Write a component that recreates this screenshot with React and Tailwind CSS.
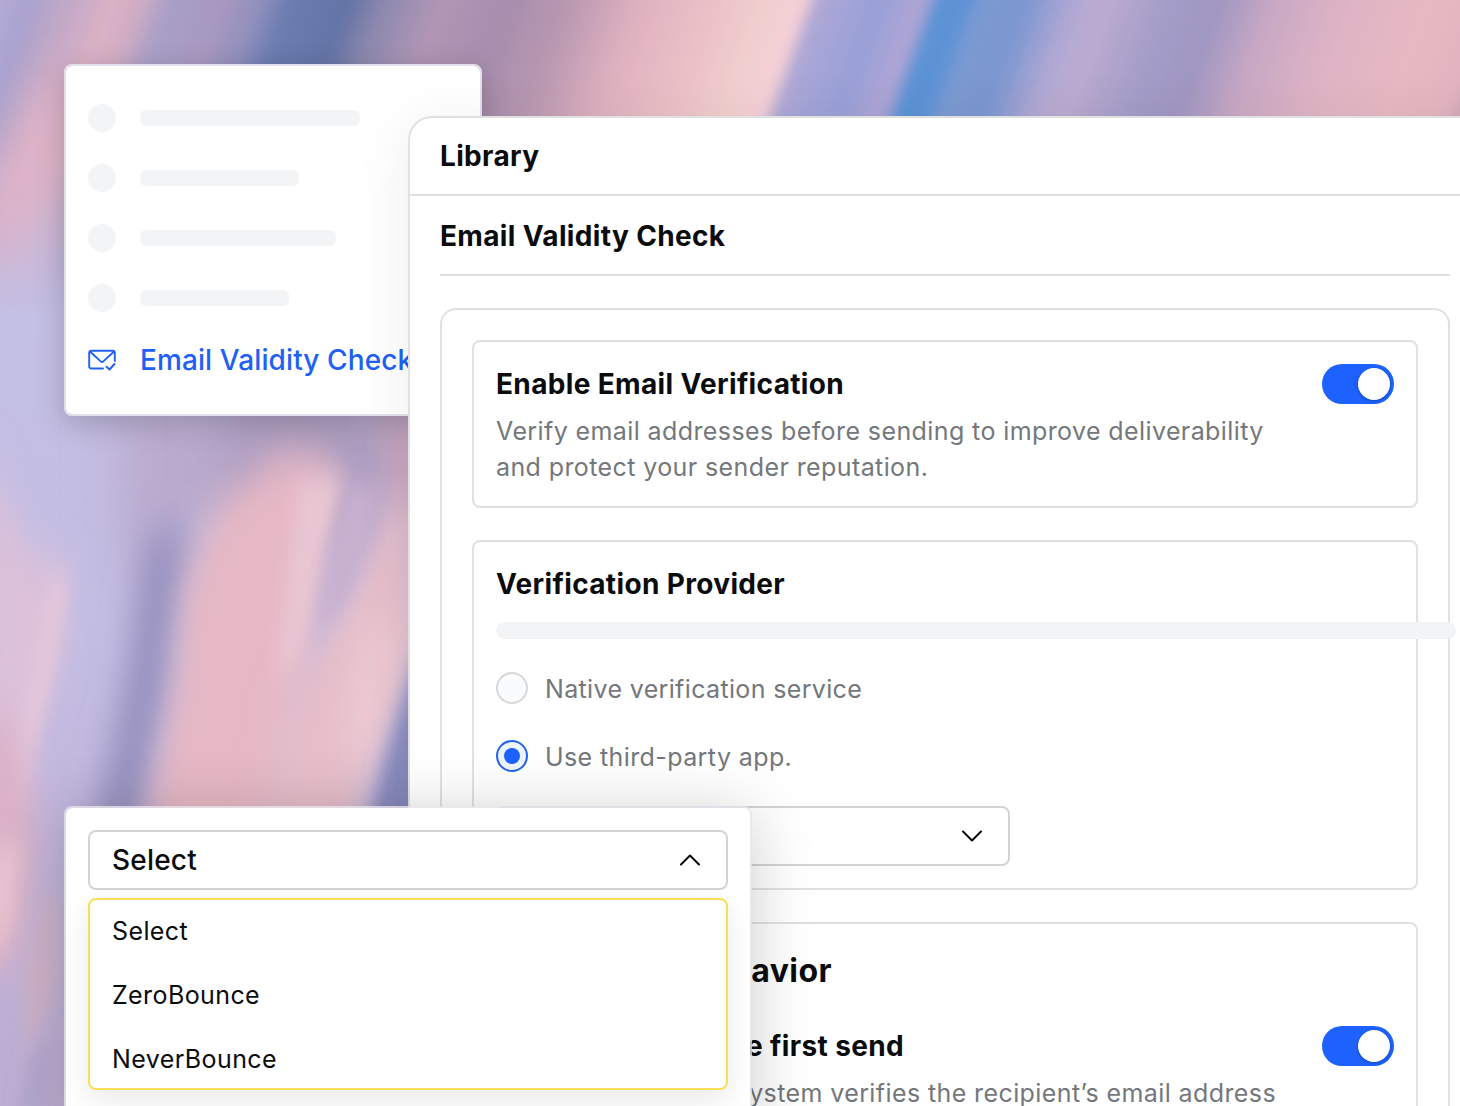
import React from "react";

function Toggle() {
  return (
    <div className="flex h-10 w-[72px] shrink-0 items-center justify-end rounded-full bg-[#1d62fe] p-1">
      <div className="size-8 rounded-full bg-white shadow-[0_1px_3px_rgba(0,0,0,0.3)]" />
    </div>
  );
}

function Wallpaper() {
  const stops = [
    [0, "#b4abd6"], [30, "#a9a2cf"], [58, "#bca6c8"], [115, "#dcb2c5"], [140, "#d0acc4"], [170, "#a8a0c7"],
    [225, "#a898c0"], [262, "#8f8fbd"], [290, "#6c7cb0"], [350, "#6474a6"], [385, "#8c88ae"], [440, "#b196b5"],
    [510, "#a78eae"], [570, "#b898b0"], [640, "#dfb1bf"], [720, "#ecc2c7"], [770, "#f1cfcf"], [806, "#f5d0d7"],
    [817, "#aea8d6"], [880, "#98a0d8"], [925, "#b1a6d4"], [939, "#5c93d6"], [965, "#5b92d4"], [985, "#7c9ad3"], [1025, "#7a96d0"],
    [1075, "#b0a8d4"], [1105, "#bcabd0"], [1170, "#a39dc8"], [1220, "#a096c2"], [1275, "#c8a8c4"], [1350, "#dfb4c4"], [1430, "#e6b8c2"],
    [1490, "#e2b4bf"], [1520, "#b48fa8"],
  ];
  return (
    <svg className="absolute inset-0" width="1460" height="1106" viewBox="0 0 1460 1106" aria-hidden="true">
      <defs>
        <linearGradient id="sky" gradientUnits="userSpaceOnUse" x1="0" y1="0" x2="1520" y2="0">
          {stops.map(([x, c]) => (
            <stop key={x} offset={x / 1520} stopColor={c} />
          ))}
        </linearGradient>
        <linearGradient id="fade" x1="0" y1="0" x2="0" y2="1">
          <stop offset="0" stopColor="#c6bee2" stopOpacity="0" />
          <stop offset="0.17" stopColor="#c4bfe4" />
          <stop offset="0.5" stopColor="#c3bde3" />
          <stop offset="1" stopColor="#bfaed2" />
        </linearGradient>
        <filter id="b5" x="-10%" y="-10%" width="120%" height="120%"><feGaussianBlur stdDeviation="6 8" /></filter>
        <filter id="b8" x="-50%" y="-50%" width="200%" height="200%"><feGaussianBlur stdDeviation="8 14" /></filter>
        <filter id="b16" x="-50%" y="-50%" width="200%" height="200%"><feGaussianBlur stdDeviation="15 22" /></filter>
        <filter id="b26" x="-50%" y="-50%" width="200%" height="200%"><feGaussianBlur stdDeviation="26" /></filter>
      </defs>
      <g filter="url(#b5)">
        <rect x="-100" y="-100" width="1900" height="1300" fill="url(#sky)" transform="skewX(-20)" />
      </g>
      <rect x="0" y="150" width="430" height="956" fill="url(#fade)" />
      <path d="M76 70 L56 170 L-10 270 L-10 190 L40 90Z" fill="#dfb4c8" filter="url(#b16)" />
      <path d="M120 400 L410 400 L410 520 L200 520 L150 640 L120 520Z" fill="#baaacd" filter="url(#b26)" />
      <path d="M225 400 L330 400 L410 450 L360 560 L230 500Z" fill="#aa9bbf" filter="url(#b26)" />
      <path d="M375 410 L440 410 L440 560 L400 520Z" fill="#c6a2bc" filter="url(#b16)" />
      <path d="M148 530 L190 530 L170 690 L140 850 L88 850 L120 700Z" fill="#9792c0" filter="url(#b16)" />
      <path d="M280 450 L335 460 L322 560 L295 700 L280 860 L140 860 L175 690 L185 590 L215 510 Z" fill="#e6b8c4" filter="url(#b16)" />
      <path d="M345 473 L332 530 L300 660 L275 680 L300 480Z" fill="#e9c6d3" filter="url(#b8)" />
      <path d="M390 500 L410 480 L420 640 L370 760 L352 850 L260 850 L280 710 L335 610Z" fill="#e6bec9" filter="url(#b16)" />
      <path d="M348 480 L385 490 L355 590 L315 640 L325 560Z" fill="#c8b0cf" filter="url(#b8)" />
      <path d="M370 620 L404 620 L388 720 L358 790 L345 720Z" fill="#edcad3" filter="url(#b16)" />
      <path d="M430 620 L430 850 L362 850 L388 750Z" fill="#898bbf" filter="url(#b8)" />
      <path d="M-20 440 L4 500 L36 560 L66 560 L62 640 L30 740 L20 820 L-20 820Z" fill="#dcc1d9" filter="url(#b16)" />
      <path d="M54 575 L68 575 L48 690 L18 800 L8 800Z" fill="#e8c8da" filter="url(#b8)" />
      <path d="M-20 690 L20 750 L36 840 L20 960 L-20 980Z" fill="#dcb0c6" filter="url(#b16)" />
      <path d="M-10 850 L22 840 L14 920 L-10 960Z" fill="#e8c2cf" filter="url(#b8)" />
      <path d="M42 900 L58 900 L52 990 L30 1060 L24 980Z" fill="#d0b2c8" filter="url(#b8)" />
      <path d="M12 1000 L-20 980 L-20 1120 L12 1120Z" fill="#bdaed6" filter="url(#b8)" />
      <path d="M52 1030 L40 1120 L18 1120 L30 1060Z" fill="#b0a6cd" filter="url(#b8)" />
    </svg>
  );
}

function Sidebar() {
  const bars = ["w-[220px]", "w-[159px]", "w-[196px]", "w-[149px]"];
  return (
    <div className="absolute left-16 top-16 h-[352px] w-[418px] rounded-lg border-2 border-[#e4dfeb] bg-white bg-clip-padding px-[22px] pt-[38px] shadow-[0_8px_30px_rgba(0,0,0,0.2)]">
      <div className="flex flex-col gap-8">
        {bars.map((w) => (
          <div key={w} className="flex h-7 items-center gap-6">
            <div className="size-7 rounded-full bg-[#f2f4f5]" />
            <div className={`h-4 rounded-md bg-[#f2f4f5] ${w}`} />
          </div>
        ))}
      </div>
      <div className="mt-[30px] flex h-9 items-center gap-6 text-[#2060f4]">
        <svg className="size-7 shrink-0" viewBox="0 0 28 28" fill="none" stroke="currentColor" strokeWidth="1.9" strokeLinecap="round" strokeLinejoin="round">
          <path d="M15 22.5H3.2A2 2 0 0 1 1.2 20.500V6.700A2 2 0 0 1 3.200 4.700H24.800A2 2 0 0 1 26.800 6.700V15" />
          <path d="M2.200 5.700L13 15.600a1.500 1.500 0 0 0 2 0L25.800 5.700" />
          <path d="M18.500 20.700L21.500 23.500L26.500 18" />
        </svg>
        <span className="whitespace-nowrap text-[28px] font-medium tracking-[0.1px]">Email Validity Check</span>
      </div>
    </div>
  );
}

function Library() {
  return (
    <div className="absolute left-[408px] top-[116px] h-[1010px] w-[1080px] rounded-tl-3xl border-2 border-[#e1e1e2] bg-white shadow-[0_8px_60px_rgba(0,0,0,0.07)]">
      <div className="flex h-[78px] items-center border-b-2 border-[#e1e1e2] px-[30px]">
        <h1 className="text-[28px] font-[650] tracking-[0.35px]">Library</h1>
      </div>
      <div className="ml-[30px] w-[1010px]">
        <div className="flex h-20 items-center border-b-2 border-[#e1e1e2]">
          <h2 className="pt-0.5 text-[28px] font-[650] tracking-[0.35px]">Email Validity Check</h2>
        </div>
        <div className="mt-8 flex h-[900px] flex-col gap-8 rounded-2xl border-2 border-[#e1e1e2] p-[30px]">
          <section className="flex h-[168px] shrink-0 items-start justify-between rounded-lg border-2 border-[#e1e1e2] p-[22px]">
            <div>
              <h3 className="text-[28px] leading-10 font-[650] tracking-[0.35px]">Enable Email Verification</h3>
              <p className="mt-[9px] whitespace-nowrap text-[25px] leading-9 tracking-[0.4px] text-[#74777c]">
                Verify email addresses before sending to improve deliverability
                <br />
                and protect your sender reputation.
              </p>
            </div>
            <Toggle />
          </section>

          <section className="flex h-[350px] shrink-0 flex-col rounded-lg border-2 border-[#e1e1e2] p-[22px]">
            <h3 className="text-[28px] leading-10 font-[650] tracking-[0.35px]">Verification Provider</h3>
            <div className="relative mt-[18px] h-[17px] w-[960px] shrink-0 rounded-full bg-[#f3f4f6]" />
            <div className="mt-[33px] flex h-8 items-center gap-[17px]">
              <div className="size-8 rounded-full border-2 border-[#d6d7d8] bg-[#fafbfc]" />
              <span className="pt-[3px] text-[25px] tracking-[0.35px] text-[#74777c]">Native verification service</span>
            </div>
            <div className="mt-9 flex h-8 items-center gap-[17px]">
              <div className="flex size-8 items-center justify-center rounded-full border-2 border-[#2463eb] bg-[#eef5ff]">
                <div className="size-4 rounded-full bg-[#1d62fe]" />
              </div>
              <span className="pt-[3px] text-[25px] tracking-[0.4px] text-[#74777c]">Use third-party app.</span>
            </div>
            <div className="mt-[34px] flex h-[60px] w-[514px] shrink-0 items-center justify-end rounded-lg border-2 border-[#d3d4d5] px-[26px]">
              <svg width="20" height="12" viewBox="0 0 20 12" fill="none" stroke="#0b0b0c" strokeWidth="2" strokeLinecap="round" strokeLinejoin="round">
                <path d="M1 1.500L10 10.500L19 1.500" />
              </svg>
            </div>
          </section>

          <section className="h-[240px] shrink-0 rounded-lg border-2 border-[#e1e1e2] p-[22px]">
            <div className="flex h-12 w-[336px] items-center justify-end pt-0.5">
              <h2 className="whitespace-nowrap text-[32px] font-[650] tracking-[0.45px]">Verification Behavior</h2>
            </div>
            <div className="mt-8 flex h-10 items-center justify-between">
              <div className="flex w-[408px] justify-end">
                <h3 className="whitespace-nowrap text-[28px] font-[650] tracking-[0.35px]">Verify email before first send</h3>
              </div>
              <Toggle />
            </div>
            <div className="mt-[9px] flex w-[780px] justify-end">
              <p className="whitespace-nowrap text-[25px] leading-9 tracking-[0.4px] text-[#74777c]">
                When enabled, the system verifies the recipient’s email address
              </p>
            </div>
          </section>
        </div>
      </div>
    </div>
  );
}

function ProviderSelect() {
  return (
    <div className="absolute left-16 top-[806px] h-[340px] w-[688px] rounded-lg border-2 border-[#e6e2ea]/80 bg-white bg-clip-padding p-[22px] shadow-[0_8px_64px_rgba(0,0,0,0.2)]">
      <div className="flex h-[60px] items-center justify-between rounded-lg border-2 border-[#d3d4d5] bg-white px-[22px]">
        <span className="text-[28px] font-medium tracking-[0.2px]">Select</span>
        <svg className="mr-[4px]" width="20" height="12" viewBox="0 0 20 12" fill="none" stroke="#0b0b0c" strokeWidth="2" strokeLinecap="round" strokeLinejoin="round">
          <path d="M1 10.500L10 1.500L19 10.500" />
        </svg>
      </div>
      <ul className="mt-2 flex h-[192px] flex-col justify-center gap-0.5 rounded-lg border-2 border-[#f8df58] bg-white px-[22px] text-[25px] tracking-[0.4px] shadow-[0_10px_30px_rgba(0,0,0,0.09)]">
        {["Select", "ZeroBounce", "NeverBounce"].map((name) => (
          <li key={name} className="flex h-[62px] shrink-0 items-center pt-1">{name}</li>
        ))}
      </ul>
    </div>
  );
}

export default function App() {
  return (
    <div className="relative h-[1106px] w-[1460px] overflow-hidden bg-[#bfb6dc] text-[#0b0c0e]" style={{ fontFamily: 'Inter, "Liberation Sans", sans-serif' }}>
      <Wallpaper />
      <Sidebar />
      <Library />
      <ProviderSelect />
    </div>
  );
}
